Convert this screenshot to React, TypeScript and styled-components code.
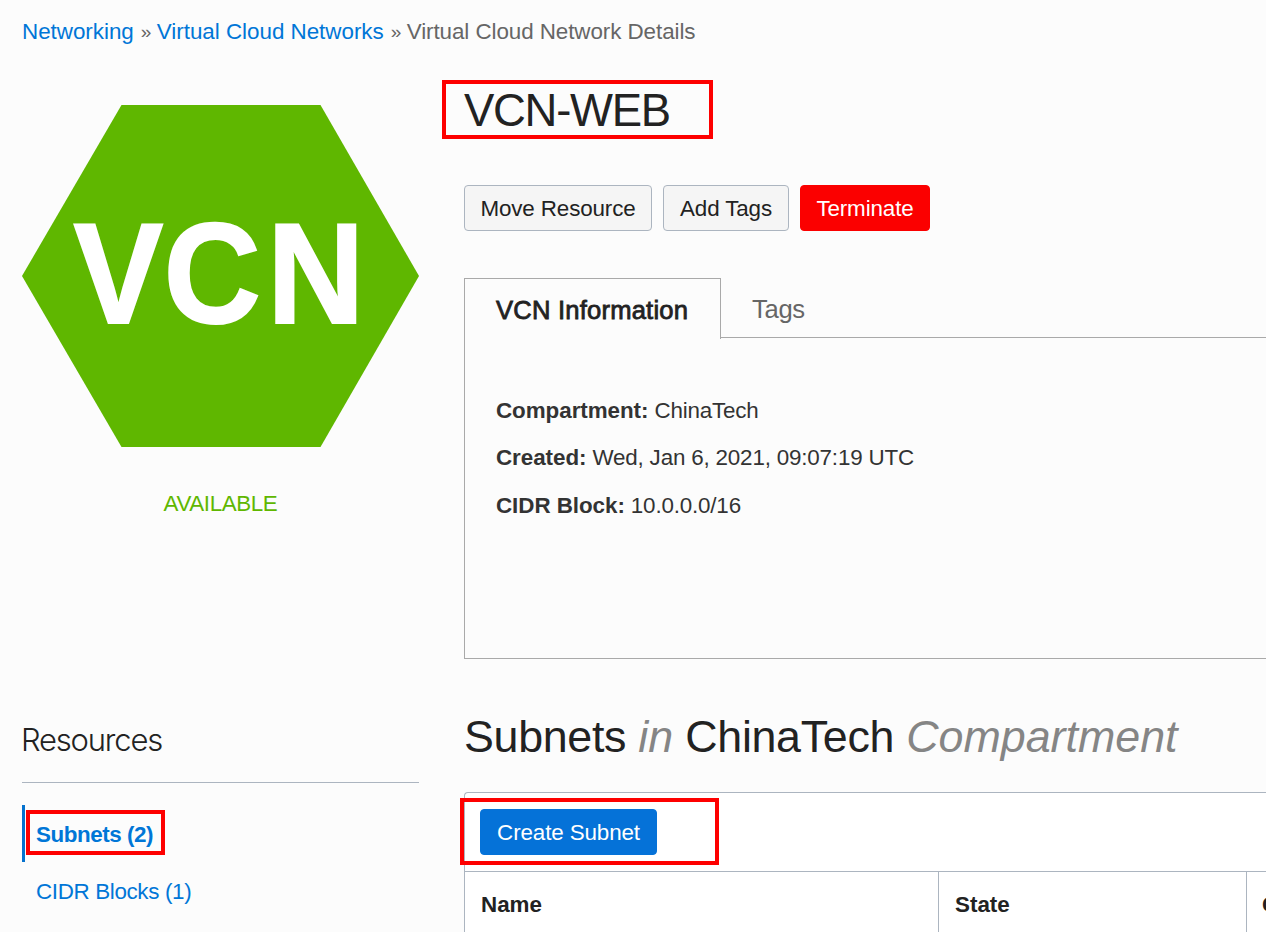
import React from "react";
import styled, { createGlobalStyle, css } from "styled-components";

const GlobalStyle = createGlobalStyle`
  *, *::before, *::after { box-sizing: border-box; }
  html, body { margin: 0; padding: 0; }
  body {
    background: #fcfcfc;
    color: #222;
    font-family: "Liberation Sans", Arial, sans-serif;
    font-size: 22.4px;
    overflow: hidden;
  }
`;

const Page = styled.div`
  height: 932px;
  overflow: hidden;
  padding-left: 22px;
`;

const Breadcrumbs = styled.nav`
  display: flex;
  gap: 7px;
  height: 80px;
  padding-top: 17px;
  line-height: 30px;
  color: #666;
  white-space: nowrap;
`;

const Crumb = styled.a`
  color: #0076d7;
  letter-spacing: -0.02px;
`;

const CurrentCrumb = styled.span`
  letter-spacing: -0.07px;
`;

const Separator = styled.span`
  width: 9px;
  font-size: 19px;
  letter-spacing: -1px;
`;

const Columns = styled.div`
  display: grid;
  grid-template-columns: 397px 1fr;
  column-gap: 45px;
`;

const Sidebar = styled.aside`
  display: flex;
  flex-direction: column;
  padding-top: 25px;
`;

const Hexagon = styled.svg`
  display: block;
  width: 397px;
  height: 342px;
`;

const Status = styled.div`
  margin-top: 42px;
  line-height: 30px;
  text-align: center;
  color: #5fb700;
  letter-spacing: -0.4px;
`;

const SidebarTitle = styled.h2`
  margin: 201px 0 0;
  height: 63px;
  border-bottom: 1px solid #acb5c0;
  font-family: Inter, "Liberation Sans", sans-serif;
  font-size: 31px;
  font-weight: 300;
  line-height: 39px;
  letter-spacing: -1.2px;
  text-indent: -1px;
`;

const ResourceList = styled.ul`
  list-style: none;
  margin: 22px 0 0;
  padding: 0;
`;

const ResourceItem = styled.li<{ $active?: boolean }>`
  height: 57px;
  padding-left: 11px;
  border-left: 3px solid ${(p) => (p.$active ? "#0572ce" : "transparent")};
  color: #0076d7;
  font-weight: ${(p) => (p.$active ? 700 : 400)};
  line-height: 60px;
  letter-spacing: ${(p) => (p.$active ? -0.45 : -0.35)}px;
`;

const Marked = styled.div<{ $top: number; $left: number; $width: number; $height: number }>`
  position: relative;
  &::after {
    content: "";
    position: absolute;
    top: ${(p) => p.$top}px;
    left: ${(p) => p.$left}px;
    width: ${(p) => p.$width}px;
    height: ${(p) => p.$height}px;
    border: 4px solid #fe0000;
    pointer-events: none;
  }
`;

const Main = styled.main`
  min-width: 0;
`;

const Title = styled.h1`
  margin: 0;
  height: 105px;
  font-size: 45.5px;
  font-weight: 400;
  line-height: 62px;
  letter-spacing: -1.3px;
`;

const Actions = styled.div`
  display: flex;
  gap: 11px;
`;

type Tone = "default" | "danger" | "primary";

const tones = {
  default: css`
    background: #f5f5f5;
    border-color: #acb5c0;
    color: #222;
  `,
  danger: css`
    background: #fb0000;
    border-color: #fb0000;
    color: #fff;
  `,
  primary: css`
    background: #0572d8;
    border-color: #0572d8;
    color: #fff;
  `,
};

const Button = styled.button<{ $tone?: Tone; $width: number }>`
  width: ${(p) => p.$width}px;
  height: 46px;
  padding: 1px 0 0;
  border: 1px solid;
  border-radius: 4px;
  font: inherit;
  line-height: 44px;
  letter-spacing: -0.12px;
  white-space: nowrap;
  ${(p) => tones[p.$tone ?? "default"]}
`;

const Tabs = styled.div`
  display: flex;
  margin-top: 47px;
  height: 60px;
  font-size: 25.6px;
`;

const Tab = styled.div<{ $active?: boolean }>`
  padding: 0 31px;
  line-height: 63px;
  ${(p) =>
    p.$active
      ? css`
          width: 257px;
          height: 61px;
          border: 1px solid #a9a9a9;
          border-bottom: 0;
          letter-spacing: 0.2px;
          -webkit-text-stroke: 0.8px #222;
        `
      : css`
          flex: 1;
          border-bottom: 1px solid #a9a9a9;
          letter-spacing: -0.3px;
          color: #666;
        `}
`;

const Panel = styled.div`
  height: 321px;
  padding: 49px 0 0 31px;
  border-left: 1px solid #a9a9a9;
  border-bottom: 1px solid #a9a9a9;
  color: #333;
`;

const Field = styled.div`
  height: 47.4px;
  line-height: 47.4px;
  letter-spacing: -0.18px;
  white-space: nowrap;
`;

const Label = styled.b`
  margin-right: 6px;
  letter-spacing: -0.05px;
`;

const SectionTitle = styled.h2`
  margin: 0;
  height: 133px;
  padding-top: 47px;
  font-size: 44.8px;
  font-weight: 400;
  line-height: 60px;
  letter-spacing: -0.32px;
  white-space: nowrap;
  em {
    color: #858585;
    letter-spacing: 0;
  }
`;

const TableCard = styled.div`
  height: 150px;
  background: #fff;
  border: 1px solid #acb5c0;
  border-width: 1px 0 0 1px;
  border-top-left-radius: 4px;
`;

const Toolbar = styled.div`
  height: 79px;
  padding: 16px 0 0 15px;
  border-bottom: 1px solid #acb5c0;
`;

const HeaderRow = styled.div`
  display: grid;
  grid-template-columns: 474px 308px 1fr;
  height: 70px;
  overflow: hidden;
`;

const HeaderCell = styled.div`
  padding-left: 16px;
  line-height: 65px;
  font-weight: 700;
  white-space: nowrap;
  & + & {
    padding-left: 16px;
    border-left: 1px solid #acb5c0;
    margin-left: -1px;
  }
  &:last-child {
    padding-left: 15px;
  }
`;

export default function App() {
  return (
    <Page>
      <GlobalStyle />
      <Breadcrumbs>
        <Crumb>Networking</Crumb>
        <Separator>»</Separator>
        <Crumb>Virtual Cloud Networks</Crumb>
        <Separator>»</Separator>
        <CurrentCrumb>Virtual Cloud Network Details</CurrentCrumb>
      </Breadcrumbs>
      <Columns>
        <Sidebar>
          <Hexagon viewBox="0 0 397 342">
            <polygon points="99.5,0 298.5,0 397,171 298.5,342 99.5,342 0,171" fill="#5fb700" />
            <text
              transform="translate(52 218.4) scale(0.94 1)"
              x="-0.5 95.5 205.5"
              y="0"
              fill="#fff"
              stroke="#fff"
              strokeWidth="2"
              fontFamily="Liberation Sans, Arial, sans-serif"
              fontWeight="700"
              fontSize="143"
            >
              VCN
            </text>
          </Hexagon>
          <Status>AVAILABLE</Status>
          <SidebarTitle>Resources</SidebarTitle>
          <ResourceList>
            <Marked $top={5} $left={4} $width={139} $height={45}>
              <ResourceItem $active>Subnets (2)</ResourceItem>
            </Marked>
            <ResourceItem>CIDR Blocks (1)</ResourceItem>
          </ResourceList>
        </Sidebar>
        <Main>
          <Marked $top={0} $left={-22} $width={271} $height={59}>
            <Title>VCN-WEB</Title>
          </Marked>
          <Actions>
            <Button $width={188}>Move Resource</Button>
            <Button $width={126}>Add Tags</Button>
            <Button $width={130} $tone="danger">Terminate</Button>
          </Actions>
          <Tabs>
            <Tab $active>VCN Information</Tab>
            <Tab>Tags</Tab>
          </Tabs>
          <Panel>
            <Field><Label>Compartment:</Label>ChinaTech</Field>
            <Field><Label>Created:</Label>Wed, Jan 6, 2021, 09:07:19 UTC</Field>
            <Field><Label>CIDR Block:</Label>10.0.0.0/16</Field>
          </Panel>
          <SectionTitle>
            Subnets <em>in</em> ChinaTech <em>Compartment</em>
          </SectionTitle>
          <TableCard>
            <Marked $top={5} $left={-5} $width={259} $height={67}>
              <Toolbar>
                <Button $width={177} $tone="primary">Create Subnet</Button>
              </Toolbar>
            </Marked>
            <HeaderRow>
              <HeaderCell>Name</HeaderCell>
              <HeaderCell>State</HeaderCell>
              <HeaderCell>CIDR Block</HeaderCell>
            </HeaderRow>
          </TableCard>
        </Main>
      </Columns>
    </Page>
  );
}
